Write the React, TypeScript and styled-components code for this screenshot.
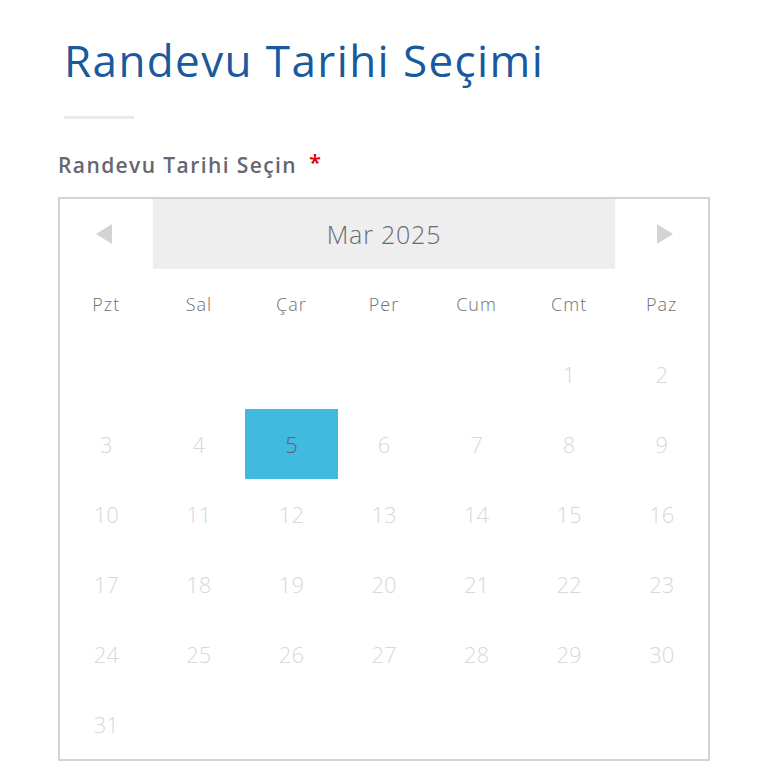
import React from "react";
import styled, { createGlobalStyle } from "styled-components";

const GlobalStyle = createGlobalStyle`
  html, body {
    margin: 0;
    padding: 0;
    background: #ffffff;
  }
  body {
    font-family: "Open Sans", "Noto Sans", sans-serif;
  }
`;

const Page = styled.div`
  width: 768px;
  padding: 0 58px;
  box-sizing: border-box;
`;

const Heading = styled.div`
  padding: 30px 0 0 6px;
`;

const Title = styled.h1`
  margin: 0;
  font-size: 44px;
  line-height: 60px;
  font-weight: 400;
  color: #195a9e;
  letter-spacing: 1.4px;
`;

const Divider = styled.div`
  width: 70px;
  height: 3px;
  background: #e9e9e9;
  margin-top: 26px;
`;

const FieldLabel = styled.label`
  display: flex;
  align-items: flex-start;
  gap: 12px;
  margin-top: 32px;
  font-size: 21px;
  line-height: 28px;
  font-weight: 600;
  color: #66666f;
  letter-spacing: 1.4px;
`;

const Required = styled.span`
  color: #e00000;
  font-size: 22px;
  line-height: 20px;
`;

const Calendar = styled.div`
  margin-top: 18px;
  width: 652px;
  border: 2px solid #d4d4d4;
  box-sizing: border-box;
  display: grid;
  grid-template-columns: repeat(7, 1fr);
  grid-auto-rows: 70px;
`;

const NavCell = styled.button<{ $dir: "prev" | "next" }>`
  border: none;
  background: transparent;
  padding: 0;
  display: flex;
  align-items: center;
  justify-content: center;
  cursor: pointer;
  &::before {
    content: "";
    width: 0;
    height: 0;
    border-top: 10px solid transparent;
    border-bottom: 10px solid transparent;
    ${({ $dir }) =>
      $dir === "prev"
        ? "border-right: 16px solid #d3d3d3; margin-right: 4px;"
        : "border-left: 16px solid #d3d3d3; margin-left: 6px;"}
  }
`;

const MonthTitle = styled.div`
  grid-column: span 5;
  background: #eeeeee;
  display: flex;
  align-items: center;
  justify-content: center;
  font-size: 25px;
  font-weight: 300;
  color: #6a6a72;
  letter-spacing: 0.8px;
`;

const Weekday = styled.div`
  display: flex;
  align-items: center;
  justify-content: center;
  font-size: 18px;
  font-weight: 300;
  color: #6f6f76;
  letter-spacing: 1px;
`;

const Day = styled.div<{ $selected?: boolean }>`
  display: flex;
  align-items: center;
  justify-content: center;
  font-size: 22px;
  font-weight: 300;
  color: ${({ $selected }) => ($selected ? "#5b6470" : "#d8d8d8")};
  background: ${({ $selected }) => ($selected ? "#42b9de" : "transparent")};
`;

const weekdays = ["Pzt", "Sal", "Çar", "Per", "Cum", "Cmt", "Paz"];
const offset = 5;
const daysInMonth = 31;
const selected = 5;

const App: React.FC = () => {
  const cells: (number | null)[] = [];
  for (let i = 0; i < offset; i++) cells.push(null);
  for (let d = 1; d <= daysInMonth; d++) cells.push(d);
  while (cells.length % 7 !== 0) cells.push(null);

  return (
    <Page>
      <GlobalStyle />
      <Heading>
        <Title>Randevu Tarihi Seçimi</Title>
        <Divider />
      </Heading>
      <FieldLabel>
        Randevu Tarihi Seçin <Required>*</Required>
      </FieldLabel>
      <Calendar>
        <NavCell $dir="prev" aria-label="Önceki ay" />
        <MonthTitle>Mar 2025</MonthTitle>
        <NavCell $dir="next" aria-label="Sonraki ay" />
        {weekdays.map(w => (
          <Weekday key={w}>{w}</Weekday>
        ))}
        {cells.map((d, i) => (
          <Day key={i} $selected={d === selected}>
            {d ?? ""}
          </Day>
        ))}
      </Calendar>
    </Page>
  );
};

export default App;
